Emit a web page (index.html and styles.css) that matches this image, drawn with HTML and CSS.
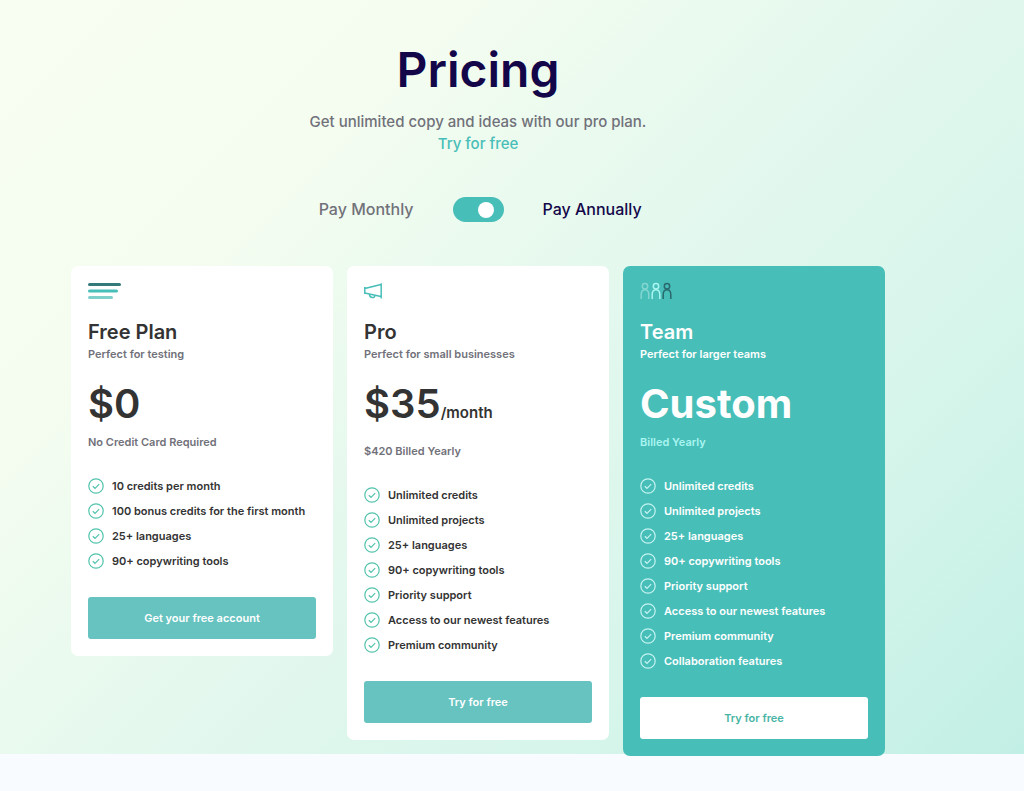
FILE: index.html
```html
<!DOCTYPE html>
<html lang="en">
<head>
    <meta charset="UTF-8">
    <meta name="viewport" content="width=device-width, initial-scale=1.0">
    <title>Pricing</title>
    <link rel="stylesheet" href="styles.css">
</head>
<body>
    <svg class="sprite" aria-hidden="true">
        <symbol id="check" viewBox="0 0 16 16">
            <circle cx="8" cy="8" r="7.2"/>
            <path d="M4.800 8.300l2.200 2 4.200-4.200"/>
        </symbol>
        <symbol id="person" viewBox="0 0 10 18">
            <circle cx="5" cy="4.200" r="2.700"/>
            <path d="M1.200 17v-4.500c0-6.500 7.600-6.500 7.600 0V17"/>
        </symbol>
    </svg>

    <main class="pricing">
        <header class="intro">
            <h1>Pricing</h1>
            <p>Get unlimited copy and ideas with our pro plan.</p>
            <a href="#plans">Try for free</a>
        </header>

        <div class="billing">
            <label class="monthly" for="billingToggle">Pay Monthly</label>
            <input type="checkbox" class="toggle" id="billingToggle" checked>
            <label class="annually" for="billingToggle">Pay Annually</label>
        </div>

        <div class="plans" id="plans">
            <section class="card">
                <svg class="icon icon-lines" viewBox="0 0 33 18" aria-hidden="true">
                    <path d="M1.500 2.500h30" stroke="#347a78"/>
                    <path d="M1.500 9h27" stroke="#48beb8"/>
                    <path d="M1.500 15.500h22" stroke="#7fcfcb"/>
                </svg>
                <h2>Free Plan</h2>
                <p class="tagline">Perfect for testing</p>
                <p class="price">$0</p>
                <p class="note">No Credit Card Required</p>
                <ul class="features">
                    <li><svg class="tick"><use href="#check"/></svg>10 credits per month</li>
                    <li><svg class="tick"><use href="#check"/></svg>100 bonus credits for the first month</li>
                    <li><svg class="tick"><use href="#check"/></svg>25+ languages</li>
                    <li><svg class="tick"><use href="#check"/></svg>90+ copywriting tools</li>
                </ul>
                <button type="button">Get your free account</button>
            </section>

            <section class="card">
                <svg class="icon icon-horn" viewBox="0 0 19 18" aria-hidden="true">
                    <path d="M.8 5v7M.8 6.500L17 2.500M.8 11L17 14.500M17.200 1.200v15.300"/>
                    <path d="M5.500 12.300c0 4.200 5.500 4.200 5.500 1"/>
                </svg>
                <h2>Pro</h2>
                <p class="tagline">Perfect for small businesses</p>
                <p class="price">$35<span>/month</span></p>
                <p class="note">$420 Billed Yearly</p>
                <ul class="features">
                    <li><svg class="tick"><use href="#check"/></svg>Unlimited credits</li>
                    <li><svg class="tick"><use href="#check"/></svg>Unlimited projects</li>
                    <li><svg class="tick"><use href="#check"/></svg>25+ languages</li>
                    <li><svg class="tick"><use href="#check"/></svg>90+ copywriting tools</li>
                    <li><svg class="tick"><use href="#check"/></svg>Priority support</li>
                    <li><svg class="tick"><use href="#check"/></svg>Access to our newest features</li>
                    <li><svg class="tick"><use href="#check"/></svg>Premium community</li>
                </ul>
                <button type="button">Try for free</button>
            </section>

            <section class="card card-team">
                <svg class="icon icon-people" viewBox="0 0 32 18" aria-hidden="true">
                    <use href="#person" x="0" width="10" height="18" stroke="#83d6d2"/>
                    <use href="#person" x="11" width="10" height="18" stroke="#a9f5f1"/>
                    <use href="#person" x="22" width="10" height="18" stroke="#29696d"/>
                </svg>
                <h2>Team</h2>
                <p class="tagline">Perfect for larger teams</p>
                <p class="price">Custom</p>
                <p class="note">Billed Yearly</p>
                <ul class="features">
                    <li><svg class="tick"><use href="#check"/></svg>Unlimited credits</li>
                    <li><svg class="tick"><use href="#check"/></svg>Unlimited projects</li>
                    <li><svg class="tick"><use href="#check"/></svg>25+ languages</li>
                    <li><svg class="tick"><use href="#check"/></svg>90+ copywriting tools</li>
                    <li><svg class="tick"><use href="#check"/></svg>Priority support</li>
                    <li><svg class="tick"><use href="#check"/></svg>Access to our newest features</li>
                    <li><svg class="tick"><use href="#check"/></svg>Premium community</li>
                    <li><svg class="tick"><use href="#check"/></svg>Collaboration features</li>
                </ul>
                <button type="button">Try for free</button>
            </section>
        </div>
    </main>
</body>
</html>
```
FILE: styles.css
```css
* {
    box-sizing: border-box;
}

body {
    margin: 0;
    min-height: 100vh;
    background: #f8fbff;
    font-family: 'Inter', 'Lato', sans-serif;
    font-weight: 600;
    color: #333;
}

h1, h2, p, ul {
    margin: 0;
    padding: 0;
}

.sprite {
    display: none;
}

.pricing {
    display: flow-root;
    padding: 38px 139px 0 71px;
    background: linear-gradient(135deg, #f8fef2 0%, #f5fdf0 25%, #e4f8ee 50%, #d6f5eb 75%, #c2efe5 100%);
}

.intro {
    text-align: center;
    font-size: 15px;
    line-height: 22px;
    font-weight: 500;
    color: #71717a;
}

.intro h1 {
    margin-bottom: 9px;
    font-size: 48px;
    line-height: 64px;
    font-weight: 600;
    color: #130749;
}

.intro a {
    color: #48beb8;
    text-decoration: none;
}

.billing {
    display: grid;
    grid-template-columns: 1fr auto 1fr;
    align-items: center;
    gap: 39px;
    margin: 42px 0 44px;
    font-size: 16px;
    line-height: 25px;
    font-weight: 500;
}

.monthly {
    justify-self: end;
    color: #71717a;
}

.annually {
    justify-self: start;
    color: #130749;
}

.toggle {
    appearance: none;
    width: 51px;
    height: 25px;
    margin: 0;
    padding: 0 10px;
    display: flex;
    align-items: center;
    border-radius: 13px;
    background: #48beb8;
    cursor: pointer;
}

.toggle::before {
    content: '';
    width: 16px;
    height: 16px;
    border-radius: 50%;
    background: #fff;
}

.toggle:checked {
    justify-content: flex-end;
}

.plans {
    display: grid;
    grid-template-columns: repeat(3, 1fr);
    align-items: start;
    gap: 14px;
    /* the tallest card hangs over the edge of the gradient */
    margin-bottom: -2px;
}

.card {
    padding: 16px 17px 17px;
    border-radius: 7px;
    background: #fff;
    font-size: 11px;
    line-height: 16px;
}

.icon {
    display: block;
    height: 18px;
    fill: none;
    stroke-width: 1.5;
}

.icon-lines {
    width: 33px;
    stroke-width: 3;
    stroke-linecap: round;
}

.icon-horn {
    width: 19px;
    stroke: #48beb8;
}

.icon-people {
    width: 32px;
}

.card h2 {
    margin-top: 18px;
    font-size: 20px;
    line-height: 28px;
    font-weight: 600;
}

.tagline,
.note {
    color: #71717a;
}

.price {
    margin: 14px 0 2px;
    font-size: 40px;
    line-height: 56px;
    font-weight: 600;
}

.price span {
    font-size: 15px;
}

.features {
    display: grid;
    gap: 9px;
    margin: 28px 0;
    list-style: none;
}

.features li {
    display: flex;
    align-items: center;
    gap: 8px;
}

.tick {
    width: 16px;
    height: 16px;
    fill: none;
    stroke: #52c3ac;
    stroke-width: 1.2;
}

.card button {
    width: 100%;
    height: 42px;
    border: none;
    border-radius: 3px;
    background: #66c3bf;
    color: #fff;
    font: inherit;
    cursor: pointer;
}

.card-team {
    background: #48beb8;
    color: #fff;
}

.card-team .tagline {
    color: #fff;
}

.card-team .price {
    font-weight: 700;
}

.card-team .note {
    color: #a9f5f1;
}

.card-team .tick {
    stroke: #c5f4f2;
}

.card-team button {
    background: #fff;
    color: #48b5a5;
}
```
